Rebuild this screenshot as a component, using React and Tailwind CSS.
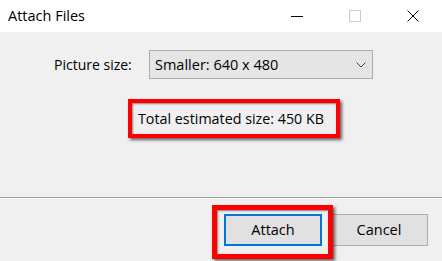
export default function App() {
  return (
    <div className="w-[442px] h-[261px] bg-[#f0f0f0] text-black overflow-hidden" style={{ fontFamily: '"Open Sans", "Noto Sans", sans-serif' }}>
      {/* barre de titre */}
      <div className="h-[32px] bg-white flex items-center">
        <div className="pl-[8px] text-[14.5px] flex-1 leading-none">Attach Files</div>
        <div className="flex items-center h-full">
          <div className="w-[58px] h-full flex items-center justify-center">
            <div className="w-[12px] h-px bg-black" />
          </div>
          <div className="w-[58px] h-full flex items-center justify-center">
            <div className="w-[12px] h-[12px] border border-[#cccccc]" />
          </div>
          <div className="w-[58px] h-full flex items-center justify-center">
            <svg width="12" height="12" viewBox="0 0 12 12">
              <path d="M0.5 0.5 L11.5 11.5 M11.5 0.5 L0.5 11.5" stroke="#000" strokeWidth="1" fill="none" />
            </svg>
          </div>
        </div>
      </div>

      {/* contenu */}
      <div className="pt-[18px]">
        <div className="flex items-center">
          <div className="ml-[54px] w-[95px] text-[14px]">Picture size:</div>
          <div className="w-[224px] h-[29px] border border-[#adadad] bg-[#e5e5e5] flex items-center justify-between pl-[5px] pr-[6px]">
            <span className="text-[14.5px]">Smaller: 640 x 480</span>
            <svg width="10" height="6" viewBox="0 0 10 6">
              <path d="M0.5 0.5 L5 5 L9.5 0.5" stroke="#444" strokeWidth="1" fill="none" />
            </svg>
          </div>
        </div>

        <div className="mt-[20px] ml-[128px] w-[212px] h-[39px] border-4 border-[#ff0000] flex items-center pl-[6px] shadow-[2px_2px_3px_rgba(0,0,0,0.6),inset_1px_1px_2px_rgba(0,0,0,0.45)]">
          <span className="text-[14.3px]">Total estimated size: 450 KB</span>
        </div>
      </div>

      {/* séparateur */}
      <div className="mt-[59px] border-t border-[#a0a0a0] border-b border-b-white" />

      {/* boutons */}
      <div className="flex justify-end gap-[8px] pr-[14px] pt-[15px]">
        <div className="relative">
          <button className="w-[98px] h-[32px] border-2 border-[#0078d7] bg-[#e1e1e1] text-[14.5px]">Attach</button>
          <div className="absolute left-[-12px] right-[-11px] top-[-9px] bottom-[-13px] border-[5px] border-[#ff0000] shadow-[2px_2px_3px_rgba(0,0,0,0.6),inset_1px_1px_2px_rgba(0,0,0,0.45)] pointer-events-none" />
        </div>
        <button className="w-[98px] h-[32px] border border-[#adadad] bg-[#e1e1e1] text-[14.5px]">Cancel</button>
      </div>
    </div>
  );
}
